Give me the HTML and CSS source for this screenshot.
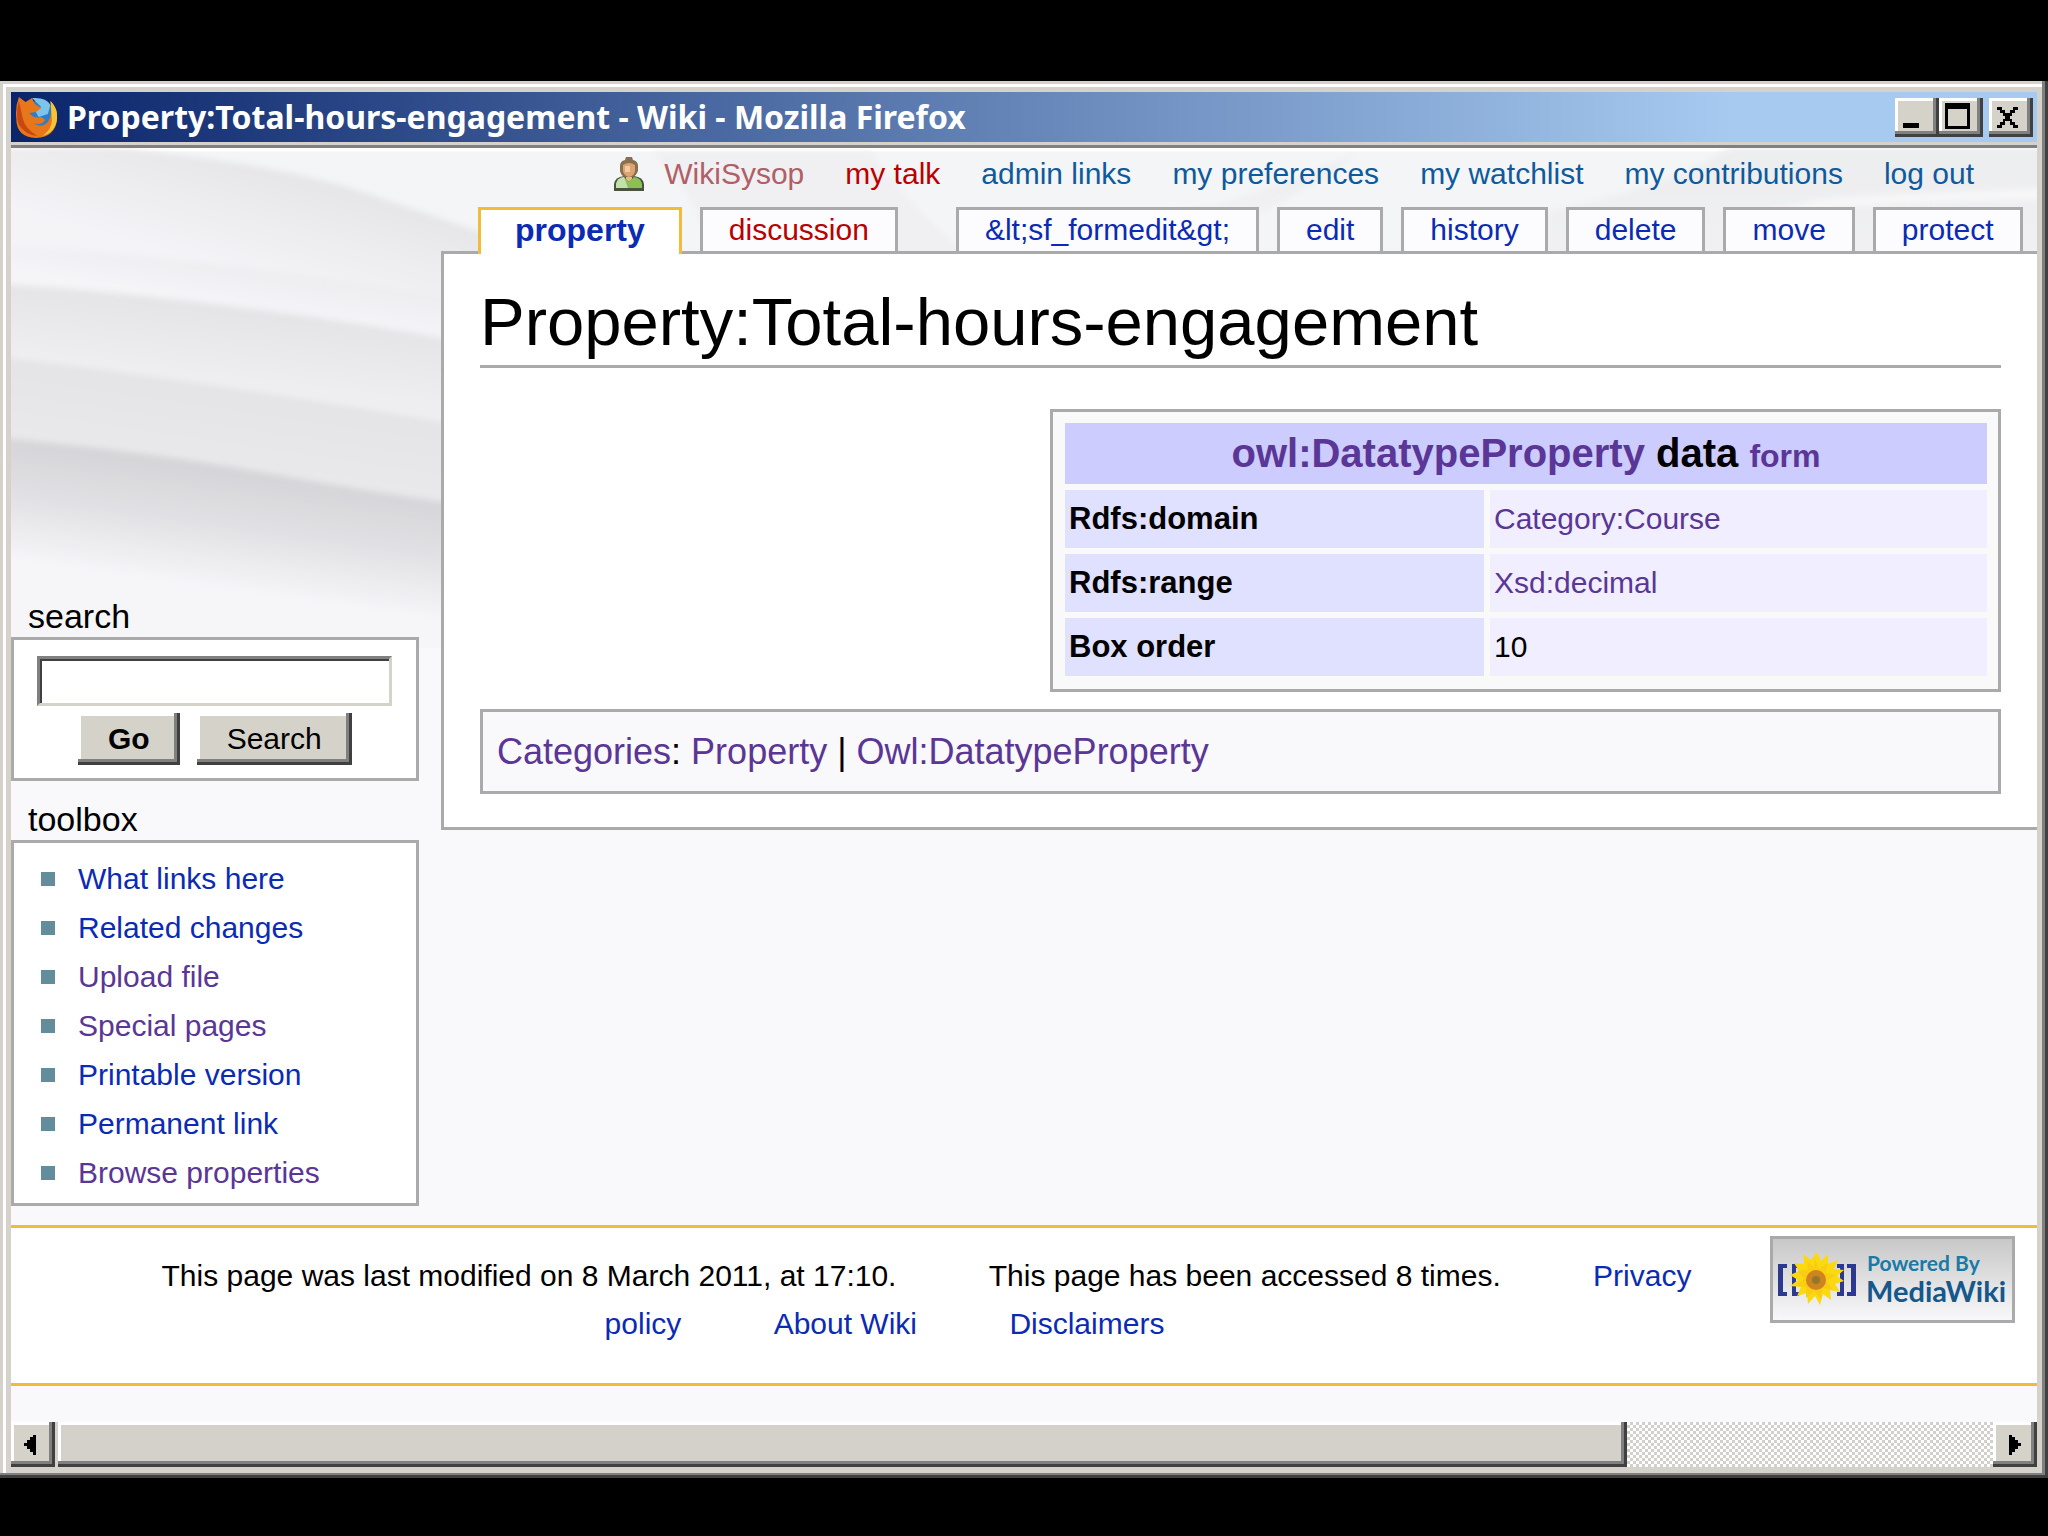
FILE: index.html
```
<!DOCTYPE html>
<html lang="en">
<head>
    <meta charset="UTF-8">
    <meta name="viewport" content="width=device-width, initial-scale=1.0">
    <title>Property:Total-hours-engagement - Wiki</title>
    <link rel="stylesheet" href="styles.css">
</head>
<body>
    <div class="window">
        <div class="titlebar">
            <svg class="app-icon" viewBox="0 0 32 44" preserveAspectRatio="none" aria-hidden="true">
                <circle cx="17" cy="19" r="13" fill="#2f7fc4"/>
                <path d="M13 3 Q24 2 27 10 L25 19 L18 22 L15 15 L20 12 Z" fill="#7cc4ea"/>
                <path d="M3 2 L8 7 L13 3 L15 9 L20 13 L16 17 L11 18 Q14 24 20 22 L23 25 Q20 31 14 28 Q20 34 25 27 Q29 20 27 6 Q33 14 32 24 Q31 42 16 43 Q1 42 1 24 Q0 12 3 2 Z" fill="#e8761a"/>
                <path d="M27 6 Q33 14 32 24 Q31 37 21 41 Q29 33 28 23 Z" fill="#f7c234"/>
                <path d="M3 6 Q0 20 3 30 Q8 40 17 41 Q8 34 6 24 Z" fill="#c9480f"/>
            </svg>
            <span class="title">Property:Total-hours-engagement - Wiki - Mozilla Firefox</span>
            <div class="window-buttons">
                <button type="button" aria-label="Minimize">
                    <svg viewBox="0 0 40 38"><rect x="8" y="25" width="16" height="5"/></svg>
                </button>
                <button type="button" aria-label="Maximize">
                    <svg viewBox="0 0 40 38"><path d="M6 5h25v26H6z M9 11v17h19V11z" fill-rule="evenodd"/></svg>
                </button>
                <button type="button" class="close" aria-label="Close">
                    <svg viewBox="0 0 40 38"><path d="M8 9h5v3h3v3h5v-3h3V9h5v3h-3v3h-3v3h-2v3h2v3h3v3h3v3h-5v-3h-3v-4h-5v4h-3v3H8v-3h3v-3h3v-3h2v-3h-2v-3h-3v-3H8z"/></svg>
                </button>
            </div>
        </div>

        <div class="page">
            <svg class="backdrop" width="2026" height="500" viewBox="0 0 2026 500" aria-hidden="true">
                <defs>
                    <linearGradient id="fade" x1="0" y1="0" x2="0" y2="1">
                        <stop offset="0" stop-color="#f0f0f2"/>
                        <stop offset="0.6" stop-color="#ededef"/>
                        <stop offset="1" stop-color="#f9f8fb"/>
                    </linearGradient>
                    <linearGradient id="fold1" gradientUnits="userSpaceOnUse" x1="250" y1="20" x2="222" y2="120">
                        <stop offset="0" stop-color="#e6e6e8"/>
                        <stop offset="1" stop-color="#f4f3f6"/>
                    </linearGradient>
                    <linearGradient id="fold2" gradientUnits="userSpaceOnUse" x1="220" y1="106" x2="212" y2="156">
                        <stop offset="0" stop-color="#ececef"/>
                        <stop offset="1" stop-color="#f5f4f7"/>
                    </linearGradient>
                    <linearGradient id="fold3" gradientUnits="userSpaceOnUse" x1="215" y1="158" x2="205" y2="238">
                        <stop offset="0" stop-color="#e4e3e6"/>
                        <stop offset="1" stop-color="#efeef1"/>
                    </linearGradient>
                    <linearGradient id="fold4" gradientUnits="userSpaceOnUse" x1="215" y1="240" x2="203" y2="322">
                        <stop offset="0" stop-color="#e4e3e6"/>
                        <stop offset="1" stop-color="#e9e8eb"/>
                    </linearGradient>
                    <linearGradient id="fold5" gradientUnits="userSpaceOnUse" x1="215" y1="320" x2="198" y2="440">
                        <stop offset="0" stop-color="#d5d4d7"/>
                        <stop offset="0.5" stop-color="#e2e1e4"/>
                        <stop offset="1" stop-color="#f6f5f8"/>
                    </linearGradient>
                    <linearGradient id="sweep" x1="0" y1="0" x2="0" y2="1">
                        <stop offset="0" stop-color="#ecedee"/>
                        <stop offset="1" stop-color="#f1f1f3"/>
                    </linearGradient>
                    <filter id="soft"><feGaussianBlur stdDeviation="3"/></filter>
                </defs>
                <rect y="4" width="2026" height="496" fill="url(#fade)"/>
                <rect y="4" width="2026" height="110" fill="#f4f5f6"/>
                <g filter="url(#soft)">
                    <path d="M-20 0 H100 Q280 16 372 51 Q430 70 490 92 V210 H-20 Z" fill="url(#fold1)"/>
                    <path d="M-20 98 Q220 108 490 160 V210 H-20 Z" fill="url(#fold2)"/>
                    <path d="M-20 135 Q240 152 490 201 V290 H-20 Z" fill="url(#fold3)"/>
                    <path d="M-20 208 Q220 236 490 284 V370 H-20 Z" fill="url(#fold4)"/>
                    <path d="M-20 289 Q150 304 289 331 Q400 350 490 362 V520 H-20 Z" fill="url(#fold5)"/>
                    <path d="M640 4 H860 Q900 60 960 110 H700 Q690 50 640 4 Z" fill="#f0f0f2"/>
                    <path d="M1350 4 Q1290 30 1210 56 L1140 70 H1240 Q1300 40 1350 4 Z" fill="url(#sweep)"/>
                    <path d="M2040 0 H1720 Q1640 45 1540 62 L1480 110 H2040 Z" fill="url(#sweep)"/>
                    <path d="M1820 50 Q1900 46 2040 40 V52 Q1900 50 1720 70 Z" fill="#f7f7f8"/>
                </g>
            </svg>

            <div class="columns">
                <aside class="sidebar">
                    <form class="search">
                        <label class="portlet-title" for="searchInput">search</label>
                        <div class="portlet search-body">
                            <input type="text" id="searchInput">
                            <div class="search-buttons">
                                <button type="submit" class="go">Go</button>
                                <button type="submit">Search</button>
                            </div>
                        </div>
                    </form>
                    <nav>
                        <h2 class="portlet-title">toolbox</h2>
                        <ul class="portlet toolbox">
                            <li><a href="#">What links here</a></li>
                            <li><a href="#">Related changes</a></li>
                            <li><a href="#" class="visited">Upload file</a></li>
                            <li><a href="#" class="visited">Special pages</a></li>
                            <li><a href="#">Printable version</a></li>
                            <li><a href="#">Permanent link</a></li>
                            <li><a href="#" class="visited">Browse properties</a></li>
                        </ul>
                    </nav>
                </aside>

                <main class="main">
                    <nav class="personal">
                        <a href="#" class="user">
                            <svg viewBox="0 0 30 34" aria-hidden="true">
                                <path d="M0 34V27Q1 20 10 19h10q9 1 10 8v7z" fill="#4b5340"/>
                                <path d="M2 31V27Q3 21 10 20l5 5 5-5q7 1 8 7v4z" fill="#8cc152"/>
                                <path d="M2 31V27Q3 21 10 20l4 11z" fill="#c3e2ab"/>
                                <path d="M12 17h6v5l-3 3-3-3z" fill="#e9b88a"/>
                                <path d="M6 9Q6 4 11 3L12 0h6l1 3q5 1 5 6v5q-2 5-5 6h-8q-4-1-5-6z" fill="#86704f"/>
                                <path d="M9 8q6-4 12 0v6q-1 5-6 6-5-1-6-6z" fill="#dfa273"/>
                                <path d="M11 9h5v6h-5z" fill="#f3c9a2"/>
                            </svg>
                            WikiSysop
                        </a>
                        <a href="#" class="new">my talk</a>
                        <a href="#">admin links</a>
                        <a href="#">my preferences</a>
                        <a href="#">my watchlist</a>
                        <a href="#">my contributions</a>
                        <a href="#">log out</a>
                    </nav>
                    <nav class="tabs">
                        <a href="#" class="active">property</a>
                        <a href="#" class="new">discussion</a>
                        <a href="#" class="first-action">&amp;lt;sf_formedit&amp;gt;</a>
                        <a href="#">edit</a>
                        <a href="#">history</a>
                        <a href="#">delete</a>
                        <a href="#">move</a>
                        <a href="#">protect</a>
                    </nav>
                    <div class="content">
                        <h1>Property:Total-hours-engagement</h1>
                        <table class="infobox">
                            <tr class="heading">
                                <th colspan="2"><a href="#">owl:DatatypeProperty</a> data <a href="#" class="form-link">form</a></th>
                            </tr>
                            <tr>
                                <th scope="row">Rdfs:domain</th>
                                <td><a href="#">Category:Course</a></td>
                            </tr>
                            <tr>
                                <th scope="row">Rdfs:range</th>
                                <td><a href="#">Xsd:decimal</a></td>
                            </tr>
                            <tr>
                                <th scope="row">Box order</th>
                                <td>10</td>
                            </tr>
                        </table>
                        <div class="categories">
                            <a href="#">Categories</a>: <a href="#">Property</a> | <a href="#">Owl:DatatypeProperty</a>
                        </div>
                    </div>
                </main>
            </div>

            <footer class="footer">
                <ul>
                    <li>This page was last modified on 8 March 2011, at 17:10.</li>
                    <li>This page has been accessed 8 times.</li>
                    <li><a href="#">Privacy policy</a></li>
                    <li><a href="#">About Wiki</a></li>
                    <li><a href="#">Disclaimers</a></li>
                </ul>
                <a href="#" class="badge" aria-label="Powered by MediaWiki">
                    <svg viewBox="0 0 239 81">
                        <path d="M5 25h9v4h-4v24h4v4H5z M19 25h7v4h-3v24h3v4h-7z M83 25h-9v4h4v24h-4v4h9z M71 25h-7v4h3v24h-3v4h7z" fill="#2b3990"/>
                        <path d="M44 13l4 9 7-7 0 10 10-4-4 9 10 1-7 6 7 5-9 3 5 8-10-2 1 10-8-6-3 11-5-9-7 8-1-11-10 3 4-9-11-1 8-6-8-5 9-4-5-8 10 1-1-10 8 6z" fill="#fbd90f"/>
                        <path d="M42 20l4 10 9-6-3 10 11 2-9 6 6 9-11-2-1 11-7-8-8 7 0-11-10-1 8-7-6-8 10-1-1-9 7 6z" fill="#f8cd12"/>
                        <circle cx="43" cy="41" r="10" fill="#cf8420"/>
                        <circle cx="43" cy="41" r="4" fill="#8f7a25"/>
                        <text class="badge-small" x="94" y="32">Powered By</text>
                        <text class="badge-large" x="93" y="63">MediaWiki</text>
                    </svg>
                </a>
            </footer>
        </div>

        <div class="scrollbar">
            <button type="button" aria-label="Scroll left">
                <svg viewBox="0 0 38 38"><path d="M22 9v20h-3v-3h-3v-3h-3v-3h-3v-3h3v-3h3v-3h3V9z"/></svg>
            </button>
            <div class="thumb"></div>
            <div class="track"></div>
            <button type="button" aria-label="Scroll right">
                <svg viewBox="0 0 38 38"><path d="M13 9v20h3v-3h3v-3h3v-3h3v-3h-3v-3h-3v-3h-3V9z"/></svg>
            </button>
        </div>
    </div>
</body>
</html>
```
FILE: styles.css
```
* {
    box-sizing: border-box;
}
body {
    margin: 0;
    min-height: 100vh;
    padding: 81px 0 58px;
    display: flex;
    flex-direction: column;
    background: #000;
    color: #000;
    font-family: "Liberation Sans", Arial, sans-serif;
    font-size: 30px;
}
a {
    color: #0b2bb4;
    text-decoration: none;
}
a:hover {
    text-decoration: underline;
}
ul {
    list-style: none;
    margin: 0;
    padding: 0;
}
svg {
    display: block;
}

/* window frame */
.window {
    flex: 1;
    display: flex;
    flex-direction: column;
    padding: 11px;
    background: #d5d1cb;
    box-shadow: inset -3px -3px #404040, inset -6px -5px #808080, inset 3px 3px #d5d1cb, inset 6px 6px #fff;
}
.titlebar {
    display: flex;
    align-items: center;
    height: 50px;
    padding: 0 4px;
    background: linear-gradient(to right, #0a246a, #a6caf0 85%);
}
.app-icon {
    width: 42px;
    height: 44px;
}
.title {
    flex: 1;
    margin-left: 10px;
    color: #fff;
    font-family: "Noto Sans", Tahoma, sans-serif;
    font-size: 32px;
    font-weight: bold;
    line-height: 50px;
    white-space: nowrap;
}
.window-buttons {
    display: flex;
}
.window-buttons button, .scrollbar button, .search-buttons button {
    padding: 0;
    border: 0;
    background: #d5d2ca;
    box-shadow: inset -3px -3px #404040, inset -6px -6px #808080, inset 3px 3px #fff;
}
.window-buttons button {
    width: 44px;
    height: 39px;
}
.window-buttons .close {
    margin-left: 6px;
}
.window-buttons svg {
    width: 40px;
    height: 38px;
}

/* wiki page */
.page {
    position: relative;
    flex: 1;
    margin-top: 3px;
    border-top: 3px solid #808080;
    padding-top: 3px;
    overflow: hidden;
    background: #f9f8fb;
    box-shadow: inset 0 3px #fff;
}
.backdrop {
    position: absolute;
    top: 0;
    left: 0;
}
.columns {
    position: relative;
    display: grid;
    grid-template-columns: 430px 1fr;
}

.sidebar {
    padding-top: 444px;
}
.portlet-title {
    display: block;
    margin: 0;
    padding-left: 17px;
    font-size: 34px;
    font-weight: normal;
    line-height: 42px;
}
.portlet {
    width: 408px;
    border: 3px solid #aaa;
    background: #fff;
}
.search-body {
    height: 144px;
    margin-bottom: 17px;
    padding: 16px 23px;
}
.search-body input {
    display: block;
    width: 355px;
    height: 50px;
    padding: 0 6px;
    border: 3px solid;
    border-color: #808080 #d5d2ca #d5d2ca #808080;
    background: #fff;
    box-shadow: inset 2px 2px #404040;
    font: inherit;
}
.search-buttons {
    display: flex;
    gap: 17px;
    margin-top: 7px;
    padding-left: 41px;
}
.search-buttons button {
    height: 52px;
    padding: 0 30px;
    font: inherit;
}
.search-buttons .go {
    font-weight: bold;
}
.toolbox {
    padding: 11px 0 6px 27px;
}
.toolbox li {
    display: flex;
    align-items: center;
    gap: 23px;
    line-height: 49px;
}
.toolbox li::before {
    content: "";
    width: 14px;
    height: 14px;
    background: #638c9c;
}
.visited, .infobox a, .categories a {
    color: #5a3696;
}

.main {
    min-width: 0;
}
.personal {
    display: flex;
    justify-content: flex-end;
    gap: 41px;
    height: 56px;
    padding-right: 63px;
    line-height: 46px;
    white-space: nowrap;
}
.personal a {
    color: #0e5a9c;
}
.personal .user {
    display: flex;
    align-items: center;
    gap: 20px;
    height: 46px;
    color: #b05f66;
}
.personal svg {
    width: 30px;
    height: 34px;
}
.personal .new, .tabs .new {
    color: #ba0000;
}
.tabs {
    position: relative;
    display: flex;
    gap: 18px;
    padding-left: 37px;
    white-space: nowrap;
}
.tabs a {
    height: 44px;
    padding: 0 26px;
    border: 3px solid #aaa;
    border-bottom: 0;
    background: #fcfcfe;
    line-height: 40px;
}
.tabs .active {
    height: 47px;
    margin-bottom: -3px;
    padding: 0 34px;
    border-color: #f2bb38;
    background: #fff;
    font-size: 32px;
    font-weight: bold;
}
.tabs .first-action {
    margin-left: 40px;
}
.content {
    border: 3px solid #aaa;
    border-right: 0;
    padding: 28px 36px 33px;
    background: #fff;
}
h1 {
    margin: 0 0 41px;
    padding-bottom: 3px;
    border-bottom: 3px solid #aaa;
    font-size: 67px;
    font-weight: normal;
    line-height: 80px;
}
.infobox {
    width: 951px;
    margin: 0 0 17px auto;
    padding: 5px 5px 7px 6px;
    border: 3px solid #aaa;
    border-spacing: 6px;
    background: #f9f9fa;
}
.infobox th, .infobox td {
    height: 58px;
    padding: 0 4px;
    text-align: left;
}
.infobox th {
    width: 419px;
    background: #e0e0ff;
    font-size: 31px;
}
.infobox td {
    background: #f0eeff;
}
.infobox .heading th {
    height: 61px;
    background: #ccf;
    font-size: 40px;
    text-align: center;
}
.infobox .form-link {
    font-size: 32px;
}
.categories {
    padding: 0 14px;
    border: 3px solid #aaa;
    background: #f9f8fb;
    font-size: 36px;
    line-height: 79px;
}

.footer {
    position: relative;
    display: flex;
    align-items: flex-start;
    min-height: 161px;
    margin-top: 19px;
    padding: 8px 22px 0 84px;
    border-top: 3px solid #f2bb38;
    border-bottom: 3px solid #f2bb38;
    background: #fff;
}
.footer ul {
    flex: 1;
    padding-top: 16px;
    line-height: 48px;
    text-align: center;
}
.footer li {
    display: inline;
    margin: 0 42px;
}
.badge {
    width: 245px;
    margin-left: 54px;
    border: 3px solid #aaa;
    background: linear-gradient(#c8c8c9, #f8f8fa);
}
.badge text {
    font-family: Lato, sans-serif;
    font-weight: bold;
}
.badge-small {
    font-size: 21px;
    fill: #187aa5;
}
.badge-large {
    font-size: 29px;
    fill: #14588c;
}

/* horizontal scrollbar */
.scrollbar {
    display: flex;
    height: 45px;
}
.scrollbar button {
    width: 44px;
}
.scrollbar svg {
    width: 38px;
    height: 38px;
    margin: 0 auto;
}
.thumb {
    flex: 1571;
    margin-left: 3px;
    background: #d3d1c9;
    box-shadow: inset -3px -3px #404040, inset -6px -6px #808080, inset 3px 3px #fff;
}
.track {
    flex: 367;
    background: repeating-conic-gradient(#d3d0cc 0 25%, #fff 0 50%) 0 0 / 6px 6px;
}
```
